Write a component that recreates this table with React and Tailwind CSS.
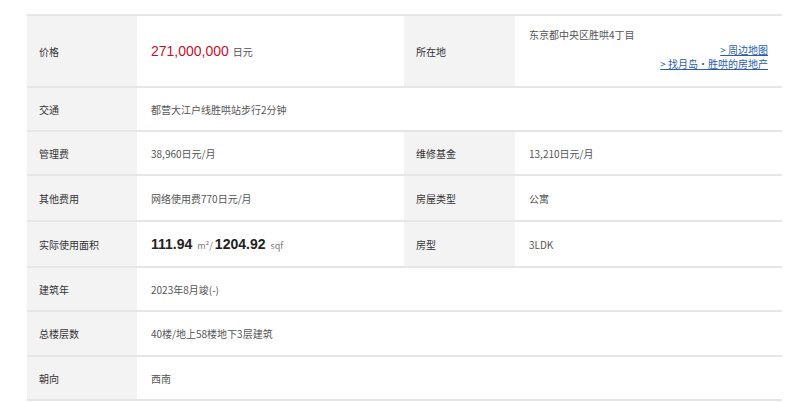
const font = { fontFamily: '"Noto Sans CJK SC", "Liberation Sans", sans-serif' };

const Label = ({ children }) => (
  <div className="flex items-center bg-[#f3f3f3] pl-[12px] text-[10px] text-[#333]">{children}</div>
);

const Value = ({ children, className = "" }) => (
  <div className={`flex items-center pl-[14px] text-[10px] text-[#555] ${className}`}>{children}</div>
);

const Row = ({ h, children }) => (
  <div className={`grid grid-cols-[110px_267px_111px_1fr] border-b-2 border-[#e6e6e6] ${h}`}>{children}</div>
);

export default function App() {
  return (
    <div className="min-h-[402px] bg-white pt-[14px]" style={font}>
      <div className="ml-[27px] w-[755px] border-t-2 border-[#e6e6e6]">
        <Row h="h-[72px]">
          <Label>价格</Label>
          <Value>
            <span className="flex items-baseline">
              <span className="text-[14px] text-[#c8102e]" style={{ fontFamily: '"Liberation Sans", sans-serif' }}>
                271,000,000
              </span>
              <span className="ml-[4px] text-[10px] text-[#555]">日元</span>
            </span>
          </Value>
          <Label>所在地</Label>
          <div className="flex flex-col pl-[14px] pr-[14px] pt-[12px] text-[10px] text-[#555]">
            <div className="leading-[14px]">东京都中央区胜哄4丁目</div>
            <div className="mt-[1px] flex flex-col items-end text-[#2a5db0]">
              <a className="block leading-[14px] underline">&gt; 周边地图</a>
              <a className="block leading-[14px] underline">&gt; 找月岛・胜哄的房地产</a>
            </div>
          </div>
        </Row>
        <Row h="h-[44px]">
          <Label>交通</Label>
          <Value className="col-span-3">都营大江户线胜哄站步行2分钟</Value>
        </Row>
        <Row h="h-[44px]">
          <Label>管理费</Label>
          <Value>38,960日元/月</Value>
          <Label>维修基金</Label>
          <Value>13,210日元/月</Value>
        </Row>
        <Row h="h-[46px]">
          <Label>其他费用</Label>
          <Value>网络使用费770日元/月</Value>
          <Label>房屋类型</Label>
          <Value>公寓</Value>
        </Row>
        <Row h="h-[46px]">
          <Label>实际使用面积</Label>
          <Value>
            <span className="flex items-baseline">
              <span className="text-[14px] font-bold text-[#222]" style={{ fontFamily: '"Liberation Sans", sans-serif' }}>
                111.94
              </span>
              <span className="ml-[5px] text-[9px] text-[#777]">m²/</span>
              <span className="ml-[2px] text-[14px] font-bold text-[#222]" style={{ fontFamily: '"Liberation Sans", sans-serif' }}>
                1204.92
              </span>
              <span className="ml-[5px] text-[9px] text-[#777]">sqf</span>
            </span>
          </Value>
          <Label>房型</Label>
          <Value>3LDK</Value>
        </Row>
        <Row h="h-[44px]">
          <Label>建筑年</Label>
          <Value className="col-span-3">2023年8月竣(-)</Value>
        </Row>
        <Row h="h-[45px]">
          <Label>总楼层数</Label>
          <Value className="col-span-3">40楼/地上58楼地下3层建筑</Value>
        </Row>
        <Row h="h-[44px]">
          <Label>朝向</Label>
          <Value className="col-span-3">西南</Value>
        </Row>
      </div>
    </div>
  );
}
